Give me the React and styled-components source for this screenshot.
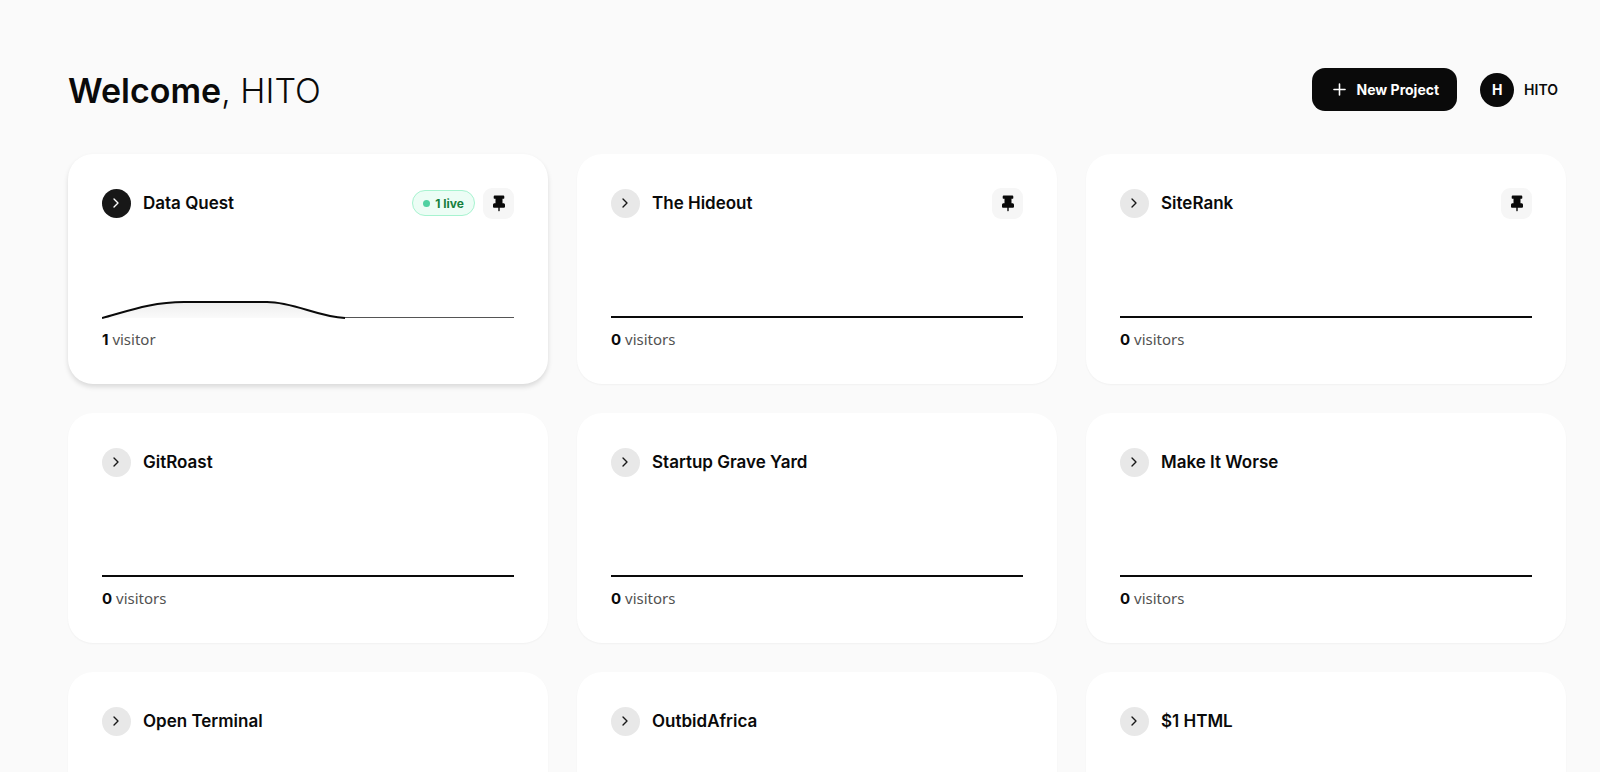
import React, { useState } from 'react'
import styled, { createGlobalStyle } from 'styled-components'
import { Plus, ChevronRight } from 'lucide-react'

const GlobalStyle = createGlobalStyle`
  * {
    box-sizing: border-box;
  }
  body {
    margin: 0;
    background-color: #fafafa;
    color: #0a0a0a;
    font-family: Inter, 'Liberation Sans', sans-serif;
  }
`

const Page = styled.main`
  display: flex;
  flex-direction: column;
  gap: 43px;
  padding: 68px 34px 34px 68px;
`

const Header = styled.header`
  display: flex;
  align-items: center;
  justify-content: space-between;
  padding-right: 8px;
`

const Title = styled.h1`
  margin: 0;
  padding-top: 2px;
  font-size: 34px;
  line-height: 41px;
  font-weight: 600;
`

const UserName = styled.span`
  font-weight: 300;
`

const Actions = styled.div`
  display: flex;
  align-items: center;
  gap: 23px;
`

const NewButton = styled.button`
  display: flex;
  align-items: center;
  gap: 8px;
  height: 43px;
  padding: 0 18px;
  border: none;
  border-radius: 13px;
  background-color: #0a0a0a;
  color: #fff;
  font-family: inherit;
  font-size: 14px;
  font-weight: 700;
  cursor: pointer;
`

const Profile = styled.a`
  display: flex;
  align-items: center;
  gap: 10px;
  color: #0a0a0a;
  font-size: 14px;
  font-weight: 600;
  text-decoration: none;
`

const Avatar = styled.span`
  display: flex;
  align-items: center;
  justify-content: center;
  width: 34px;
  height: 34px;
  border-radius: 50%;
  background-color: #0a0a0a;
  color: #fff;
  font-weight: 700;
`

const Grid = styled.section`
  display: grid;
  grid-template-columns: repeat(3, 1fr);
  gap: 29px;
`

const Card = styled.article`
  display: flex;
  flex-direction: column;
  padding: 33px 34px;
  border-radius: 25px;
  background-color: #fff;
  box-shadow: ${({ $active }) =>
    $active ? '0 3px 5px rgba(0, 0, 0, 0.13)' : '0 1px 2px rgba(0, 0, 0, 0.04)'};
`

const CardTop = styled.div`
  display: flex;
  align-items: center;
  gap: 8px;
  height: 32px;
`

const OpenButton = styled.button`
  display: flex;
  align-items: center;
  justify-content: center;
  width: 29px;
  height: 29px;
  padding: 0 1px 0 0;
  border: none;
  border-radius: 50%;
  background-color: ${({ $active }) => ($active ? '#171717' : '#e8e8e8')};
  color: ${({ $active }) => ($active ? '#fff' : '#171717')};
  cursor: pointer;
`

const ProjectName = styled.h2`
  flex: 1;
  margin: 0;
  padding-left: 4px;
  font-size: 17px;
  line-height: 24px;
  font-weight: 600;
`

const Live = styled.span`
  display: flex;
  align-items: center;
  gap: 5px;
  height: 26px;
  padding: 0 10px;
  border: 1px solid #a7f3d0;
  border-radius: 13px;
  background-color: #ecfdf5;
  color: #15803d;
  font-size: 12px;
  font-weight: 700;
`

const Dot = styled.i`
  width: 7px;
  height: 7px;
  border-radius: 50%;
  background-color: #4fd1a1;
`

const PinButton = styled.button`
  display: flex;
  align-items: center;
  justify-content: center;
  width: 31px;
  height: 31px;
  padding: 0;
  border: none;
  border-radius: 9px;
  background-color: #f6f6f6;
  color: #0a0a0a;
  cursor: pointer;
`

const Chart = styled.svg`
  display: block;
  width: 100%;
  height: 68px;
  margin-top: 32px;
`

const Visitors = styled.p`
  margin: 9px 0 0;
  color: #525252;
  font-family: 'Noto Sans', sans-serif;
  font-size: 15px;
  line-height: 23px;
`

const Count = styled.strong`
  color: #0a0a0a;
  font-family: Inter, sans-serif;
  font-weight: 700;
`

const initialProjects = [
  { name: 'Data Quest', visitors: 1, live: 1, pinned: true },
  { name: 'The Hideout', visitors: 0, pinned: true },
  { name: 'SiteRank', visitors: 0, pinned: true },
  { name: 'GitRoast', visitors: 0 },
  { name: 'Startup Grave Yard', visitors: 0 },
  { name: 'Make It Worse', visitors: 0 },
  { name: 'Open Terminal', visitors: 0 },
  { name: 'OutbidAfrica', visitors: 0 },
  { name: '$1 HTML', visitors: 0 },
]

const PinIcon = () => (
  <svg width="12" height="17" viewBox="0 0 12 17" aria-hidden="true">
    <path
      fill="currentColor"
      d="M1.600.5h8.800c.5 0 .9.400.9.900v1.500c0 .5-.4.900-.9.900h-.9v4.400h1c.8 0 1.500.7 1.500 1.500v2.100c0 .5-.4.900-.9.900H6.700v3.100L6 16.500l-.7-.7v-3.100H.9c-.5 0-.9-.4-.9-.9V9.700c0-.8.7-1.500 1.500-1.500h1V3.800h-.9c-.5 0-.9-.4-.9-.9V1.400c0-.5.4-.9.9-.9z"
    />
  </svg>
)

const Sparkline = ({ visitors }) => (
  <Chart viewBox="0 0 412 68" preserveAspectRatio="none" aria-hidden="true">
    {visitors > 0 ? (
      <>
        <defs>
          <linearGradient id="area" x1="0" y1="0" x2="0" y2="1">
            <stop offset="0" stopColor="#0a0a0a" stopOpacity="0.07" />
            <stop offset="1" stopColor="#0a0a0a" stopOpacity="0.02" />
          </linearGradient>
        </defs>
        <path
          d="M0 67C26 60 50 51 82 51H165C192 51 216 67 247 67H0Z"
          fill="url(#area)"
        />
        <path
          d="M0 67C26 60 50 51 82 51H165C192 51 216 66 243 67"
          fill="none"
          stroke="#0a0a0a"
          strokeWidth="2"
        />
        <path d="M243 66.500H412" stroke="#555" strokeWidth="1" />
      </>
    ) : (
      <path d="M0 66H412" stroke="#0a0a0a" strokeWidth="2" />
    )}
  </Chart>
)

const ProjectCard = ({ project, onPin }) => {
  const { name, visitors, live, pinned } = project
  return (
    <Card $active={!!live}>
      <CardTop>
        <OpenButton $active={!!live} aria-label={`Open ${name}`}>
          <ChevronRight size={16} strokeWidth={2} />
        </OpenButton>
        <ProjectName>{name}</ProjectName>
        {live && (
          <Live>
            <Dot />
            {live} live
          </Live>
        )}
        {pinned && (
          <PinButton aria-label={`Unpin ${name}`} onClick={onPin}>
            <PinIcon />
          </PinButton>
        )}
      </CardTop>
      <Sparkline visitors={visitors} />
      <Visitors>
        <Count>{visitors}</Count> {visitors === 1 ? 'visitor' : 'visitors'}
      </Visitors>
    </Card>
  )
}

const App = () => {
  const [projects, setProjects] = useState(initialProjects)

  const handlePin = (name) => {
    setProjects((prev) =>
      prev.map((p) => (p.name === name ? { ...p, pinned: !p.pinned } : p))
    )
  }

  return (
    <>
      <GlobalStyle />
      <Page>
        <Header>
          <Title>
            Welcome<UserName>, HITO</UserName>
          </Title>
          <Actions>
            <NewButton>
              <Plus size={19} strokeWidth={2} />
              New Project
            </NewButton>
            <Profile href="#profile">
              <Avatar>H</Avatar>
              HITO
            </Profile>
          </Actions>
        </Header>
        <Grid>
          {projects.map((p) => (
            <ProjectCard key={p.name} project={p} onPin={() => handlePin(p.name)} />
          ))}
        </Grid>
      </Page>
    </>
  )
}

export default App
